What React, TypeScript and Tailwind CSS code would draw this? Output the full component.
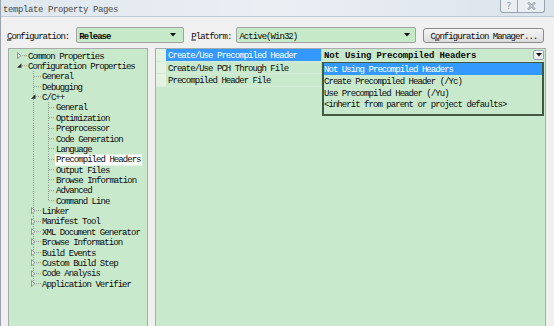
import React from "react";

const F = "font-['Liberation_Mono',monospace] text-[9px] tracking-[-0.95px] leading-none whitespace-pre translate-y-[1.5px]";
const RH = 10.36;

type Item = { t: string; lvl: 1 | 2 | 3; icon?: "c" | "e"; last?: boolean; sel?: boolean };

const items: Item[] = [
  { t: "Common Properties", lvl: 1, icon: "c" },
  { t: "Configuration Properties", lvl: 1, icon: "e" },
  { t: "General", lvl: 2 },
  { t: "Debugging", lvl: 2 },
  { t: "C/C++", lvl: 2, icon: "e" },
  { t: "General", lvl: 3 },
  { t: "Optimization", lvl: 3 },
  { t: "Preprocessor", lvl: 3 },
  { t: "Code Generation", lvl: 3 },
  { t: "Language", lvl: 3 },
  { t: "Precompiled Headers", lvl: 3, sel: true },
  { t: "Output Files", lvl: 3 },
  { t: "Browse Information", lvl: 3 },
  { t: "Advanced", lvl: 3 },
  { t: "Command Line", lvl: 3, last: true },
  { t: "Linker", lvl: 2, icon: "c" },
  { t: "Manifest Tool", lvl: 2, icon: "c" },
  { t: "XML Document Generator", lvl: 2, icon: "c" },
  { t: "Browse Information", lvl: 2, icon: "c" },
  { t: "Build Events", lvl: 2, icon: "c" },
  { t: "Custom Build Step", lvl: 2, icon: "c" },
  { t: "Code Analysis", lvl: 2, icon: "c" },
  { t: "Application Verifier", lvl: 2, icon: "c", last: true },
];

const LINE = "#8e9a8e";

function Icon({ x, kind }: { x: number; kind: "c" | "e" }) {
  const m = RH / 2 + 0.5;
  if (kind === "c") {
    return (
      <polygon
        points={`${x + 0.5},${m - 3} ${x + 4},${m} ${x + 0.5},${m + 3}`}
        fill="#e8f2e8"
        stroke="#8a8a8a"
        strokeWidth="0.9"
      />
    );
  }
  return <polygon points={`${x + 4.5},${m - 2.5} ${x + 4.5},${m + 2} ${x},${m + 2}`} fill="#2a2a2a" />;
}

function Guides({ it }: { it: Item }) {
  const w = it.lvl * 14;
  const m = RH / 2 + 0.5;
  const dash = "1 1";
  return (
    <svg width={w} height={RH} viewBox={`0 0 ${w} ${RH}`} className="shrink-0">
      {it.lvl === 1 && (
        <>
          <line x1={8} y1={m} x2={13} y2={m} stroke={LINE} strokeDasharray={dash} strokeWidth="1" />
          {it.icon && <Icon x={3} kind={it.icon} />}
        </>
      )}
      {it.lvl === 2 && (
        <>
          <line x1={19.5} y1={0} x2={19.5} y2={it.last ? m : RH} stroke={LINE} strokeDasharray={dash} strokeWidth="1" />
          <line x1={it.icon ? 22 : 20} y1={m} x2={27} y2={m} stroke={LINE} strokeDasharray={dash} strokeWidth="1" />
          {it.icon && <Icon x={17} kind={it.icon} />}
        </>
      )}
      {it.lvl === 3 && (
        <>
          <line x1={19.5} y1={0} x2={19.5} y2={RH} stroke={LINE} strokeDasharray={dash} strokeWidth="1" />
          <line x1={34.5} y1={0} x2={34.5} y2={it.last ? m : RH} stroke={LINE} strokeDasharray={dash} strokeWidth="1" />
          <line x1={35} y1={m} x2={41} y2={m} stroke={LINE} strokeDasharray={dash} strokeWidth="1" />
        </>
      )}
    </svg>
  );
}

function SmallArrow() {
  return (
    <svg width="6" height="4" viewBox="0 0 6 4">
      <polygon points="0,0 6,0 3,3.5" fill="#111" />
    </svg>
  );
}

export default function App() {
  return (
    <div className="w-[554px] h-[326px] overflow-hidden bg-[#f0f0f0] text-[#0a0a0a] border-l border-[#9aa3ad] flex flex-col">
      {/* title bar */}
      <div className="h-[17px] shrink-0 flex items-start bg-gradient-to-r from-[#dfe7ee] via-[#eaeff4] to-[#dbe3eb] border-b border-[#c3ccd5]">
        <span className="font-['Liberation_Mono',monospace] text-[9px] tracking-[-0.4px] leading-none whitespace-pre text-[#4a4a4a] mt-[6px] ml-[2px]">
          template Property Pages
        </span>
        <div className="ml-auto mr-[9px] flex">
          <div className="w-[18px] h-[13px] border border-t-0 border-[#98a3ae] rounded-bl-[3px] bg-[#e9eef3] flex items-center justify-center">
            <span className="font-['DejaVu_Sans',sans-serif] text-[9px] leading-none text-[#8d98a3]">?</span>
          </div>
          <div className="w-[27px] h-[13px] border border-t-0 border-l-0 border-[#98a3ae] rounded-br-[3px] bg-[#e9eef3] flex items-center justify-center">
            <svg width="9" height="8" viewBox="0 0 9 8">
              <path d="M1 0.5 L8 7.5 M8 0.5 L1 7.5" stroke="#8d98a3" strokeWidth="2.2" />
              <path d="M1 0.5 L8 7.5 M8 0.5 L1 7.5" stroke="#eef2f5" strokeWidth="0.8" />
            </svg>
          </div>
        </div>
      </div>

      {/* configuration row */}
      <div className="mt-[10px] h-[16px] shrink-0 flex items-center pl-[6px]">
        <span className={F}>
          <span className="underline">C</span>onfiguration:
        </span>
        <div className="ml-[7px] w-[108px] h-[16px] flex items-center border border-[#a3a3a3] rounded-[2px] bg-[#c6eac7] pl-[2px]">
          <span className={F + " font-bold"}>Release</span>
          <div className="ml-auto mr-[7px] flex">
            <SmallArrow />
          </div>
        </div>
        <span className={F + " ml-[7px]"}>
          <span className="underline">P</span>latform:
        </span>
        <div className="ml-[5px] w-[180px] h-[16px] flex items-center border border-[#a3a3a3] rounded-[2px] bg-[#c6eac7] pl-[2px]">
          <span className={F}>Active(Win32)</span>
          <div className="ml-auto mr-[5px] flex">
            <SmallArrow />
          </div>
        </div>
        <div className="ml-[7px] mt-[1px] w-[121px] h-[15px] flex items-center justify-center border border-[#8a8a8a] rounded-[3px] bg-gradient-to-b from-[#f6f6f6] to-[#dcdcdc]">
          <span className={F}>
            C<span className="underline">o</span>nfiguration Manager...
          </span>
        </div>
      </div>

      {/* main */}
      <div className="mt-[5px] flex pl-[7px]">
        {/* tree */}
        <div className="w-[140px] h-[300px] border border-[#a8aca8] bg-[#c9e9cc] pl-[5px] pt-[1px] flex flex-col">
          {items.map((it, i) => (
            <div key={i} className="flex items-center" style={{ height: RH }}>
              <Guides it={it} />
              <span className={F + (it.sel ? " bg-white px-[1px] -ml-[1px] py-[1px]" : "")}>{it.t}</span>
            </div>
          ))}
        </div>

        {/* property grid */}
        <div className="relative ml-[7px] w-[391px] h-[300px] border border-[#a8aca8] bg-[#c9e9cc]">
          {[
            "Create/Use Precompiled Header",
            "Create/Use PCH Through File",
            "Precompiled Header File",
          ].map((t, i) => (
            <div key={i} className="flex h-[12.5px] border-b border-[#d7ecd7]">
              <div className="w-[10px] bg-[#e3f2e1]" />
              <div
                className={
                  "w-[155px] flex items-center pl-[2px] " + (i === 0 ? "bg-[#3399ff] text-white" : "")
                }
              >
                <span className={F}>{t}</span>
              </div>
              <div className="flex-1 flex items-center border-l border-[#bcd8bc]">
                {i === 0 && (
                  <>
                    <span className="font-['Liberation_Mono',monospace] text-[9px] tracking-[-0.15px] leading-none whitespace-pre font-bold ml-[2px] translate-y-[1.5px]">
                      Not Using Precompiled Headers
                    </span>
                    <div className="ml-auto mr-[1px] w-[11px] h-[10px] flex items-center justify-center border border-[#9aa6b2] rounded-[2px] bg-gradient-to-b from-[#ffffff] to-[#e4e8ee]">
                      <SmallArrow />
                    </div>
                  </>
                )}
              </div>
            </div>
          ))}

          {/* open dropdown list */}
          <div className="absolute left-[166px] top-[13px] w-[222px] h-[54px] border-t border-x-2 border-b-2 border-[#3f5a40] bg-[#c9e9cc] flex flex-col">
            {[
              "Not Using Precompiled Headers",
              "Create Precompiled Header (/Yc)",
              "Use Precompiled Header (/Yu)",
              "<inherit from parent or project defaults>",
            ].map((t, i) => (
              <div
                key={i}
                className={"h-[11.7px] flex items-center " + (i === 0 ? "bg-[#3399ff] text-white" : "")}
              >
                <span className={F}>{t}</span>
              </div>
            ))}
          </div>
        </div>
      </div>
    </div>
  );
}
